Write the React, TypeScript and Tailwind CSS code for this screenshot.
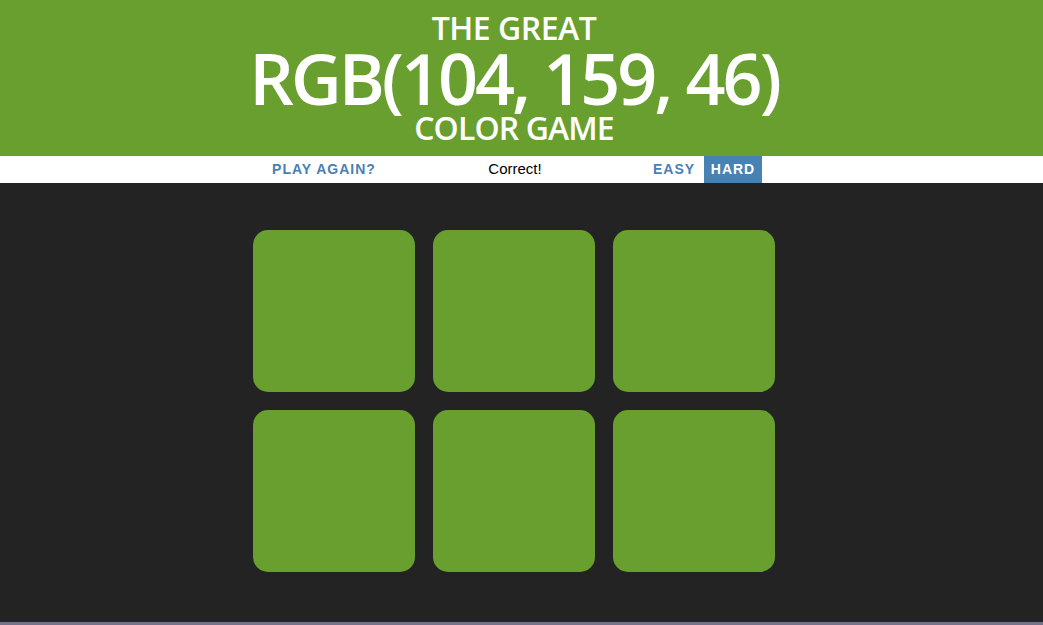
export default function App() {
  const squares = Array.from({ length: 6 });
  return (
    <div className="w-[1043px] h-[625px] flex flex-col bg-[#232323] overflow-hidden" style={{ fontFamily: '"Open Sans", "Liberation Sans", sans-serif' }}>
      <header className="h-[156px] bg-[#689f2e] text-white flex flex-col items-center pr-[15px] font-semibold">
        <h2 className="text-[32px] leading-[32px] mt-[12px] tracking-[-0.5px]">THE GREAT</h2>
        <h1 className="text-[70px] leading-[62px] mt-[3px] tracking-[-3px]">RGB(104, 159, 46)</h1>
        <h2 className="text-[32px] leading-[30px] mt-[4px] tracking-[-0.9px]">COLOR GAME</h2>
      </header>
      <div className="h-[27px] bg-white flex items-stretch pl-[262px] text-[14px]" style={{ fontFamily: '"Liberation Sans", sans-serif' }}>
        <div className="w-[124px] flex items-center justify-center font-bold text-[#4a7fb5] tracking-[1px]">PLAY AGAIN?</div>
        <div className="w-[258px] flex items-center justify-center text-black text-[15px]">Correct!</div>
        <div className="w-[60px] flex items-center justify-center font-bold text-[#4a7fb5] tracking-[1px]">EASY</div>
        <div className="w-[58px] flex items-center justify-center font-bold text-white bg-[#4682b4] tracking-[1px]">HARD</div>
      </div>
      <div className="flex-1 flex justify-center pt-[47px] pr-[15px]">
        <div className="grid grid-cols-3 gap-[18px] h-fit">
          {squares.map((_, i) => (
            <div key={i} className="w-[162px] h-[162px] rounded-[15px] bg-[#689f2e]" />
          ))}
        </div>
      </div>
      <div className="h-[3px] bg-[#76708f] shrink-0" />
    </div>
  );
}
